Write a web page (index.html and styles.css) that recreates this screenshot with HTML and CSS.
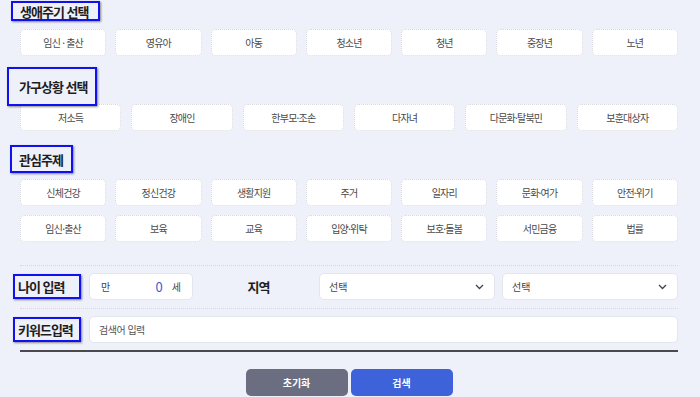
FILE: index.html
```html
<!DOCTYPE html>
<html lang="ko">
<head>
<meta charset="utf-8">
<link rel="stylesheet" href="styles.css">
</head>
<body>
<div class="page">
  <h2 class="title title-1">생애주기 선택</h2>
  <div class="grid grid-7">
    <button class="chip">임신 · 출산</button>
    <button class="chip">영유아</button>
    <button class="chip">아동</button>
    <button class="chip">청소년</button>
    <button class="chip">청년</button>
    <button class="chip">중장년</button>
    <button class="chip">노년</button>
  </div>

  <h2 class="title title-2">가구상황 선택</h2>
  <div class="grid grid-6">
    <button class="chip">저소득</button>
    <button class="chip">장애인</button>
    <button class="chip">한부모·조손</button>
    <button class="chip">다자녀</button>
    <button class="chip">다문화·탈북민</button>
    <button class="chip">보훈대상자</button>
  </div>

  <h2 class="title title-3">관심주제</h2>
  <div class="grid grid-7 grid-rows">
    <button class="chip">신체건강</button>
    <button class="chip">정신건강</button>
    <button class="chip">생활지원</button>
    <button class="chip">주거</button>
    <button class="chip">일자리</button>
    <button class="chip">문화·여가</button>
    <button class="chip">안전·위기</button>
    <button class="chip">임신·출산</button>
    <button class="chip">보육</button>
    <button class="chip">교육</button>
    <button class="chip">입양·위탁</button>
    <button class="chip">보호·돌봄</button>
    <button class="chip">서민금융</button>
    <button class="chip">법률</button>
  </div>

  <div class="divider divider-top"></div>

  <div class="form-row">
    <span class="label">나이 입력</span>
    <div class="age-box">
      <span class="age-unit">만</span>
      <span class="age-value">0</span>
      <span class="age-unit">세</span>
    </div>
    <span class="region-label">지역</span>
    <div class="select"><span>선택</span><svg width="9" height="6" viewBox="0 0 9 6"><path d="M1 1l3.5 3.5L8 1" fill="none" stroke="#444" stroke-width="1.3"/></svg></div>
    <div class="select"><span>선택</span><svg width="9" height="6" viewBox="0 0 9 6"><path d="M1 1l3.5 3.5L8 1" fill="none" stroke="#444" stroke-width="1.3"/></svg></div>
  </div>

  <div class="divider"></div>

  <div class="form-row">
    <span class="label">키워드입력</span>
    <div class="keyword">검색어 입력</div>
  </div>

  <div class="thick-line"></div>

  <div class="actions">
    <button class="btn btn-reset">초기화</button>
    <button class="btn btn-search">검색</button>
  </div>
</div>
</body>
</html>
```

FILE: styles.css
```css
* { box-sizing: border-box; }
html, body { margin: 0; padding: 0; }
body {
  background: #eff1fa;
  font-family: "Noto Sans CJK KR", "Noto Sans", sans-serif;
  color: #333;
  width: 700px;
  height: 397px;
  overflow: hidden;
}
.page {
  padding: 0 22px 0 20px;
}
.title {
  position: relative;
  z-index: 2;
  margin: 0;
  font-size: 13px;
  font-weight: 700;
  color: #1e1e1e;
  letter-spacing: -1px;
  border: 2px solid #1010f0;
  box-shadow: 1px 1px 2px rgba(0,0,0,0.45);
  display: flex;
  align-items: center;
}
.title-1 {
  width: 89px;
  height: 20px;
  margin: 1px 0 8px -9px;
  padding-left: 7px;
}
.title-2 {
  width: 90px;
  height: 39px;
  margin: 11px 0 -2px -13px;
  padding-left: 10px;
}
.title-3 {
  width: 63px;
  height: 28px;
  margin: 14px 0 6px -10px;
  padding-left: 7px;
}
.grid {
  display: grid;
  gap: 9px;
}
.grid-7 { grid-template-columns: repeat(7, 1fr); }
.grid-6 { grid-template-columns: repeat(6, 1fr); gap: 10px; }
.grid-rows { row-gap: 9px; }
.chip {
  height: 27px;
  background: #fff;
  border: 1px dotted #d6d8de;
  border-radius: 5px;
  font-family: inherit;
  font-size: 10px;
  color: #4a4a4a;
  letter-spacing: -0.8px;
  padding: 0;
}
.divider {
  border-top: 1px dotted #d5d8e2;
  margin: 8px 0 7px;
}
.divider-top {
  margin-top: 23px;
}
.form-row {
  display: flex;
  align-items: center;
  height: 27px;
}
.label {
  width: 68px;
  height: 25px;
  margin-left: -7px;
  margin-right: 8px;
  padding-left: 3px;
  border: 2px solid #1010f0;
  box-shadow: 1px 1px 2px rgba(0,0,0,0.45);
  display: flex;
  align-items: center;
  font-size: 13px;
  font-weight: 700;
  color: #1e1e1e;
  letter-spacing: -1px;
}
.age-box {
  width: 104px;
  height: 27px;
  background: #fff;
  border: 1px solid #e4e6ee;
  border-radius: 5px;
  display: flex;
  align-items: center;
  padding: 0 11px;
  font-size: 10px;
  color: #444;
}
.age-value {
  margin-left: auto;
  margin-right: 9px;
  font-size: 13px;
  color: #3a5ad8;
}
.region-label {
  width: 126px;
  text-align: center;
  font-size: 13px;
  font-weight: 700;
  color: #1e1e1e;
  letter-spacing: -1px;
  padding-left: 5px;
}
.select {
  flex: 1;
  height: 27px;
  background: #fff;
  border: 1px solid #e4e6ee;
  border-radius: 5px;
  display: flex;
  align-items: center;
  justify-content: space-between;
  padding: 0 10px 0 9px;
  font-size: 10px;
  color: #444;
}
.select + .select { margin-left: 7px; }
.keyword {
  flex: 1;
  height: 27px;
  background: #fff;
  border: 1px solid #e4e6ee;
  border-radius: 5px;
  display: flex;
  align-items: center;
  padding-left: 9px;
  font-size: 10px;
  color: #555;
  letter-spacing: -0.5px;
}
.thick-line {
  height: 2px;
  background: #4a4a4e;
  margin-top: 7px;
}
.actions {
  display: flex;
  justify-content: center;
  gap: 3px;
  margin-top: 17px;
}
.btn {
  width: 102px;
  height: 27px;
  border: 0;
  border-radius: 5px;
  color: #fff;
  font-family: inherit;
  font-size: 10px;
  font-weight: 700;
}
.btn-reset { background: #6b6d80; }
.btn-search { background: #3d62da; }
```
